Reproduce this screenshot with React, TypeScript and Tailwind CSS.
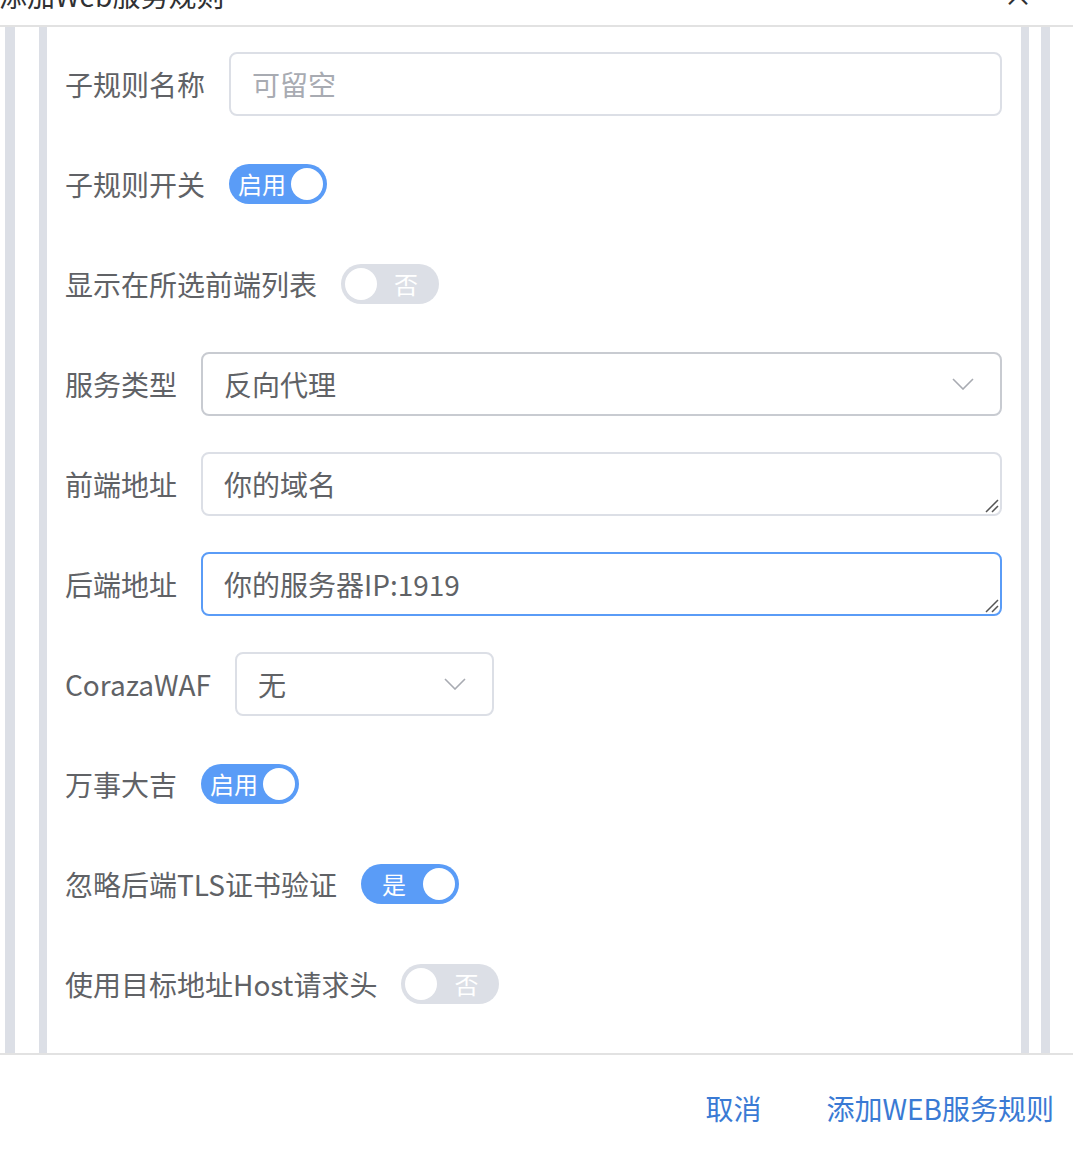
import type { ReactNode } from 'react'

const font = { fontFamily: '"Noto Sans CJK SC", "Noto Sans", sans-serif' }

function Chevron() {
  return (
    <svg width="22" height="12" viewBox="0 0 22 12" fill="none" className="shrink-0">
      <path d="M1 1l10 10L21 1" stroke="#a8abb2" strokeWidth="1.6" />
    </svg>
  )
}

function ResizeHandle() {
  return (
    <svg width="16" height="16" viewBox="0 0 16 16" className="absolute bottom-[1px] right-[1px]">
      <path d="M3 15L15 3M9 15L15 9" stroke="#555" strokeWidth="1.5" />
    </svg>
  )
}

function Switch({ on, text }: { on: boolean; text: string }) {
  return (
    <div
      className={
        'flex h-[40px] w-[98px] items-center rounded-full px-[4px] ' +
        (on ? 'bg-[#5a9cf7]' : 'bg-[#dcdfe6]')
      }
    >
      {on ? (
        <>
          <span className="flex-1 text-center text-[24px] leading-none text-white">{text}</span>
          <span className="h-[32px] w-[32px] rounded-full bg-white" />
        </>
      ) : (
        <>
          <span className="h-[32px] w-[32px] rounded-full bg-white" />
          <span className="flex-1 text-center text-[24px] leading-none text-white">{text}</span>
        </>
      )}
    </div>
  )
}

function Row({ label, children }: { label: string; children: ReactNode }) {
  return (
    <div className="mb-[36px] flex h-[64px] items-center">
      <div className="shrink-0 pr-[24px] text-[28px] leading-[64px] text-[#606266]">{label}</div>
      {children}
    </div>
  )
}

function Box({
  children,
  className = '',
}: {
  children: ReactNode
  className?: string
}) {
  return (
    <div
      className={
        'relative flex h-[64px] items-center rounded-[8px] border-2 bg-white px-[21px] text-[28px] ' +
        className
      }
    >
      {children}
    </div>
  )
}

export default function App() {
  return (
    <div className="flex h-[1156px] w-[1073px] flex-col overflow-hidden bg-white" style={font}>
      {/* header, scrolled so only the bottom of the title shows */}
      <div className="relative h-[25px] shrink-0 overflow-hidden">
        <div className="-mt-[20px] -ml-[1px] text-[28px] leading-[30px] text-[#303133]">添加Web服务规则</div>
        <div className="absolute -top-[22px] right-[40px] text-[30px] leading-[30px] text-[#303133]">×</div>
      </div>
      <div className="h-[2px] shrink-0 bg-[#e2e2e2]" />

      <div className="flex min-h-0 flex-1">
        <div className="w-[5px] shrink-0" />
        <div className="w-[10px] shrink-0 bg-[#dcdfe6]" />
        <div className="w-[24px] shrink-0" />
        <div className="w-[8px] shrink-0 bg-[#dcdfe6]" />

        <div className="min-w-0 flex-1 pt-[25px] pl-[18px] pr-[19px]">
          <Row label="子规则名称">
            <Box className="flex-1 border-[#dcdfe6] text-[#a8abb2]">可留空</Box>
          </Row>
          <Row label="子规则开关">
            <Switch on text="启用" />
          </Row>
          <Row label="显示在所选前端列表">
            <Switch on={false} text="否" />
          </Row>
          <Row label="服务类型">
            <Box className="flex-1 justify-between border-[#c8cbd1] pr-[26px] text-[#606266]">
              <span>反向代理</span>
              <Chevron />
            </Box>
          </Row>
          <Row label="前端地址">
            <Box className="flex-1 border-[#dcdfe6] text-[#606266]">
              你的域名
              <ResizeHandle />
            </Box>
          </Row>
          <Row label="后端地址">
            <Box className="flex-1 border-[#5a9cf7] text-[#606266]">
              你的服务器IP:1919
              <ResizeHandle />
            </Box>
          </Row>
          <Row label="CorazaWAF">
            <Box className="w-[259px] justify-between border-[#dcdfe6] pr-[26px] text-[#606266]">
              <span>无</span>
              <Chevron />
            </Box>
          </Row>
          <Row label="万事大吉">
            <Switch on text="启用" />
          </Row>
          <Row label="忽略后端TLS证书验证">
            <Switch on text="是" />
          </Row>
          <Row label="使用目标地址Host请求头">
            <Switch on={false} text="否" />
          </Row>
        </div>

        <div className="w-[8px] shrink-0 bg-[#dcdfe6]" />
        <div className="w-[12px] shrink-0" />
        <div className="w-[9px] shrink-0 bg-[#dcdfe6]" />
        <div className="w-[23px] shrink-0" />
      </div>

      <div className="h-[2px] shrink-0 bg-[#e2e2e2]" />
      <div className="flex h-[101px] shrink-0 items-center justify-end gap-[65px] pt-[4px] pr-[19px] text-[28px] text-[#3a7ad4]">
        <button>取消</button>
        <button>添加WEB服务规则</button>
      </div>
    </div>
  )
}
